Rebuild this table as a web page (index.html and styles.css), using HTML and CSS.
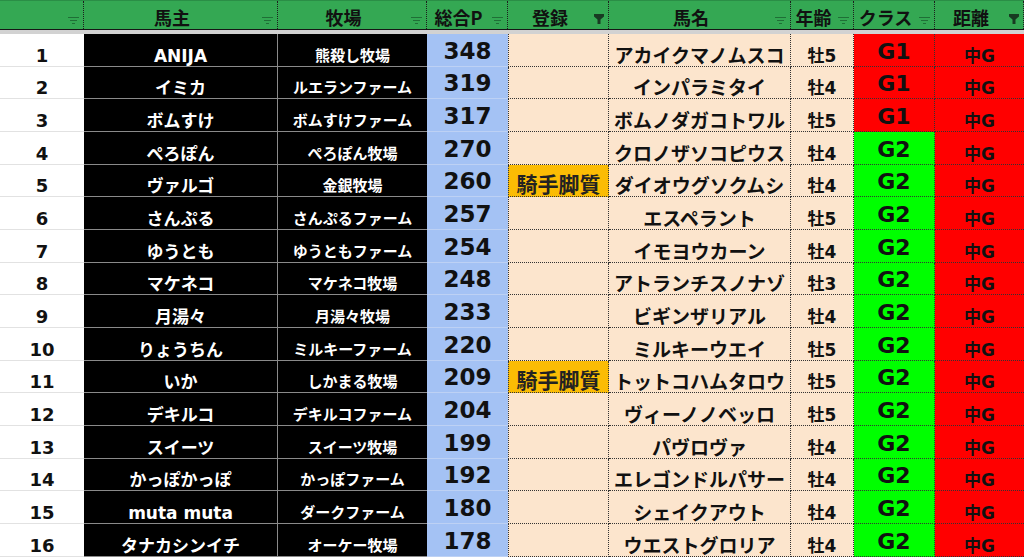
FILE: index.html
```html
<!DOCTYPE html>
<html lang="ja">
<head>
<meta charset="utf-8">
<link rel="stylesheet" href="styles.css">
</head>
<body>
<div class="sheet">
  <div class="row head">
    <div class="hc"><span class="ht"></span><svg class="fi" viewBox="0 0 11 7"><path d="M0 .5H11M2 3.5H9M4 6.5H7"/></svg></div>
    <div class="hc"><span class="ht">馬主</span><svg class="fi" viewBox="0 0 11 7"><path d="M0 .5H11M2 3.5H9M4 6.5H7"/></svg></div>
    <div class="hc"><span class="ht">牧場</span><svg class="fi" viewBox="0 0 11 7"><path d="M0 .5H11M2 3.5H9M4 6.5H7"/></svg></div>
    <div class="hc"><span class="ht">総合P</span><svg class="fi" viewBox="0 0 11 7"><path d="M0 .5H11M2 3.5H9M4 6.5H7"/></svg></div>
    <div class="hc"><span class="ht">登録</span><svg class="ff" viewBox="0 0 10 10"><path d="M0 0H10V2.5L6.5 5.5V10H3.5V5.5L0 2.5Z"/></svg></div>
    <div class="hc"><span class="ht">馬名</span><svg class="fi" viewBox="0 0 11 7"><path d="M0 .5H11M2 3.5H9M4 6.5H7"/></svg></div>
    <div class="hc"><span class="ht">年齢</span><svg class="fi" viewBox="0 0 11 7"><path d="M0 .5H11M2 3.5H9M4 6.5H7"/></svg></div>
    <div class="hc"><span class="ht">クラス</span><svg class="fi" viewBox="0 0 11 7"><path d="M0 .5H11M2 3.5H9M4 6.5H7"/></svg></div>
    <div class="hc"><span class="ht">距離</span><svg class="ff" viewBox="0 0 10 10"><path d="M0 0H10V2.5L6.5 5.5V10H3.5V5.5L0 2.5Z"/></svg></div>
  </div>
  <div class="freeze"></div>

  <div class="row"><div class="c num">1</div><div class="c own">ANIJA</div><div class="c farm">熊殺し牧場</div><div class="c pt">348</div><div class="c reg"></div><div class="c hn">アカイクマノムスコ</div><div class="c age">牡5</div><div class="c cls g1">G1</div><div class="c dist">中G</div></div>
  <div class="row"><div class="c num">2</div><div class="c own">イミカ</div><div class="c farm">ルエランファーム</div><div class="c pt">319</div><div class="c reg"></div><div class="c hn">インパラミタイ</div><div class="c age">牡4</div><div class="c cls g1">G1</div><div class="c dist">中G</div></div>
  <div class="row"><div class="c num">3</div><div class="c own">ボムすけ</div><div class="c farm">ボムすけファーム</div><div class="c pt">317</div><div class="c reg"></div><div class="c hn">ボムノダガコトワル</div><div class="c age">牡5</div><div class="c cls g1">G1</div><div class="c dist">中G</div></div>
  <div class="row"><div class="c num">4</div><div class="c own">ぺろぽん</div><div class="c farm">ぺろぽん牧場</div><div class="c pt">270</div><div class="c reg"></div><div class="c hn">クロノザソコピウス</div><div class="c age">牡4</div><div class="c cls g2">G2</div><div class="c dist">中G</div></div>
  <div class="row"><div class="c num">5</div><div class="c own">ヴァルゴ</div><div class="c farm">金銀牧場</div><div class="c pt">260</div><div class="c reg on">騎手脚質</div><div class="c hn">ダイオウグソクムシ</div><div class="c age">牡4</div><div class="c cls g2">G2</div><div class="c dist">中G</div></div>
  <div class="row"><div class="c num">6</div><div class="c own">さんぷる</div><div class="c farm">さんぷるファーム</div><div class="c pt">257</div><div class="c reg"></div><div class="c hn">エスペラント</div><div class="c age">牡5</div><div class="c cls g2">G2</div><div class="c dist">中G</div></div>
  <div class="row"><div class="c num">7</div><div class="c own">ゆうとも</div><div class="c farm">ゆうともファーム</div><div class="c pt">254</div><div class="c reg"></div><div class="c hn">イモヨウカーン</div><div class="c age">牡4</div><div class="c cls g2">G2</div><div class="c dist">中G</div></div>
  <div class="row"><div class="c num">8</div><div class="c own">マケネコ</div><div class="c farm">マケネコ牧場</div><div class="c pt">248</div><div class="c reg"></div><div class="c hn">アトランチスノナゾ</div><div class="c age">牡3</div><div class="c cls g2">G2</div><div class="c dist">中G</div></div>
  <div class="row"><div class="c num">9</div><div class="c own">月湯々</div><div class="c farm">月湯々牧場</div><div class="c pt">233</div><div class="c reg"></div><div class="c hn">ビギンザリアル</div><div class="c age">牡4</div><div class="c cls g2">G2</div><div class="c dist">中G</div></div>
  <div class="row"><div class="c num">10</div><div class="c own">りょうちん</div><div class="c farm">ミルキーファーム</div><div class="c pt">220</div><div class="c reg"></div><div class="c hn">ミルキーウエイ</div><div class="c age">牡5</div><div class="c cls g2">G2</div><div class="c dist">中G</div></div>
  <div class="row"><div class="c num">11</div><div class="c own">いか</div><div class="c farm">しかまる牧場</div><div class="c pt">209</div><div class="c reg on">騎手脚質</div><div class="c hn">トットコハムタロウ</div><div class="c age">牡5</div><div class="c cls g2">G2</div><div class="c dist">中G</div></div>
  <div class="row"><div class="c num">12</div><div class="c own">デキルコ</div><div class="c farm">デキルコファーム</div><div class="c pt">204</div><div class="c reg"></div><div class="c hn">ヴィーノノベッロ</div><div class="c age">牡5</div><div class="c cls g2">G2</div><div class="c dist">中G</div></div>
  <div class="row"><div class="c num">13</div><div class="c own">スイーツ</div><div class="c farm">スイーツ牧場</div><div class="c pt">199</div><div class="c reg"></div><div class="c hn">パヴロヴァ</div><div class="c age">牡4</div><div class="c cls g2">G2</div><div class="c dist">中G</div></div>
  <div class="row"><div class="c num">14</div><div class="c own">かっぽかっぽ</div><div class="c farm">かっぽファーム</div><div class="c pt">192</div><div class="c reg"></div><div class="c hn">エレゴンドルパサー</div><div class="c age">牡4</div><div class="c cls g2">G2</div><div class="c dist">中G</div></div>
  <div class="row"><div class="c num">15</div><div class="c own">muta muta</div><div class="c farm">ダークファーム</div><div class="c pt">180</div><div class="c reg"></div><div class="c hn">シェイクアウト</div><div class="c age">牡4</div><div class="c cls g2">G2</div><div class="c dist">中G</div></div>
  <div class="row"><div class="c num">16</div><div class="c own">タナカシンイチ</div><div class="c farm">オーケー牧場</div><div class="c pt">178</div><div class="c reg"></div><div class="c hn">ウエストグロリア</div><div class="c age">牡4</div><div class="c cls g2">G2</div><div class="c dist">中G</div></div>
</div>
</body>
</html>
```

FILE: styles.css
```css
html, body {
  margin: 0;
  padding: 0;
  background: #ffffff;
}
body {
  font-family: "DejaVu Sans", "Noto Sans CJK JP", sans-serif;
  font-weight: 700;
  color: #111;
}
.sheet {
  width: 1024px;
  height: 557px;
  overflow: hidden;
}
.row {
  display: grid;
  grid-template-columns: 84px 194px 149px 81px 101px 182px 63px 81px 89px;
  height: 32.67px;
}
.head {
  height: 30px;
  box-sizing: border-box;
  background: #34a853;
  border-top: 1px solid #2a8e46;
  border-bottom: 1px solid #161616;
}
.freeze {
  height: 4px;
  background: #d2d2d2;
}
.hc {
  display: flex;
  align-items: flex-end;
  border-right: 1px dotted #1d1d1d;
  min-width: 0;
}
.ht {
  flex: 1;
  text-align: center;
  font-family: "Noto Sans CJK JP", sans-serif;
  font-size: 18px;
  line-height: 1;
  padding-bottom: 3px;
  color: #111;
  white-space: nowrap;
}
.fi {
  width: 11px;
  height: 7px;
  margin: 0 4px 5px 2px;
  flex: none;
}
.fi path {
  stroke: #1f6f36;
  stroke-width: 1;
  fill: none;
}
.ff {
  width: 10px;
  height: 10px;
  margin: 0 4px 5px 2px;
  flex: none;
}
.ff path {
  fill: #183a22;
}
.c {
  box-sizing: border-box;
  display: flex;
  justify-content: center;
  align-items: flex-end;
  line-height: 1;
  white-space: nowrap;
  overflow: visible;
  min-width: 0;
}
.num {
  background: #fff;
  border-bottom: 1px solid #e2e2e2;
  font-size: 18px;
  padding-bottom: 1px;
  color: #111;
}
.own {
  background: #000;
  color: #fff;
  font-size: 17px;
  padding-bottom: 1px;
  border-right: 1px solid #8a8a8a;
  border-bottom: 1px solid #8a8a8a;
}
.farm {
  background: #000;
  color: #fff;
  font-size: 15px;
  padding-bottom: 2px;
  border-bottom: 1px solid #8a8a8a;
}
.pt {
  background: #a4c2f4;
  font-size: 23px;
  padding-bottom: 3px;
  border-bottom: 1px solid #bdd1f4;
  color: #111;
}
.reg {
  background: #fce5cd;
  border-left: 1px dotted #333;
  border-right: 1px dotted #333;
  border-bottom: 1px dotted #333;
  font-family: "Noto Sans CJK JP", sans-serif;
  font-size: 21px;
  padding-bottom: 2px;
}
.reg.on {
  background: #fbbc04;
  color: #222;
}
.hn {
  background: #fce5cd;
  font-family: "Noto Sans CJK JP", sans-serif;
  font-size: 19px;
  padding-bottom: 2px;
  border-right: 1px dotted #333;
  border-bottom: 1px dotted #333;
}
.age {
  background: #fce5cd;
  font-size: 17px;
  padding-bottom: 1px;
  border-right: 1px dotted #333;
  border-bottom: 1px dotted #333;
}
.cls {
  font-size: 22px;
  padding-bottom: 3px;
  border-right: 1px dotted #333;
  border-bottom: 1px dotted #333;
}
.g1 {
  background: #ff0000;
}
.g2 {
  background: #00ff00;
}
.dist {
  background: #ff0000;
  font-size: 17px;
  padding-bottom: 1px;
  border-bottom: 1px dotted #333;
}
```
